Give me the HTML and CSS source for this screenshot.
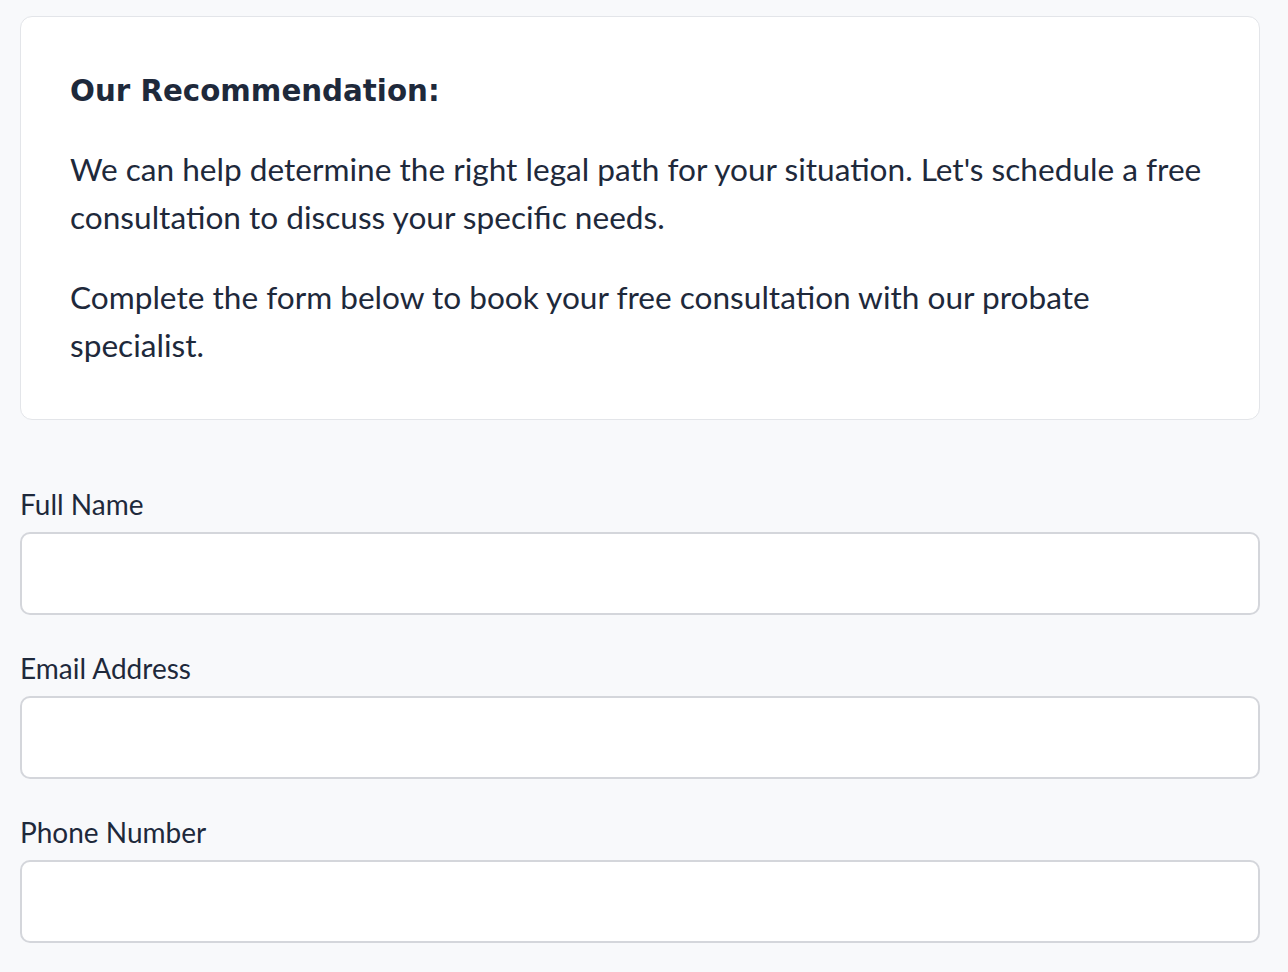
FILE: index.html
```html
<!DOCTYPE html>
<html lang="en">
<head>
<meta charset="utf-8">
<title>Free Consultation</title>
<link rel="stylesheet" href="styles.css">
</head>
<body>
<main class="page">
  <section class="card">
    <h2 class="card-title">Our Recommendation:</h2>
    <p class="card-text">We can help determine the right legal path for your situation. Let's schedule a free consultation to discuss your specific needs.</p>
    <p class="card-text">Complete the form below to book your free consultation with our probate specialist.</p>
  </section>
  <form class="form">
    <div class="field">
      <label class="label" for="name">Full Name</label>
      <input class="input" id="name" type="text">
    </div>
    <div class="field">
      <label class="label" for="email">Email Address</label>
      <input class="input" id="email" type="email">
    </div>
    <div class="field">
      <label class="label" for="phone">Phone Number</label>
      <input class="input" id="phone" type="tel">
    </div>
  </form>
</main>
</body>
</html>
```
FILE: styles.css
```css
* { box-sizing: border-box; }
html, body {
  margin: 0;
  background: #f8f9fb;
}
body {
  font-family: Lato, "Liberation Sans", sans-serif;
  color: #1e293b;
}
.page {
  padding: 16px 28px 0 20px;
}
.card {
  background: #ffffff;
  border: 1px solid #e3e5e9;
  border-radius: 12px;
  padding: 48px 48px 50px 49px;
}
.card-title {
  margin: 0 0 -4px;
  font-family: "DejaVu Sans", Inter, sans-serif;
  font-weight: 700;
  font-size: 29.3px;
  line-height: 52px;
  color: #1e293b;
}
.card-text {
  margin: 32px 0 0;
  font-size: 31.6px;
  line-height: 48px;
}
.form {
  display: flex;
  flex-direction: column;
  gap: 33px;
  padding-top: 64px;
}
.field {
  display: flex;
  flex-direction: column;
  gap: 8px;
}
.label {
  font-size: 28px;
  line-height: 40px;
  color: #1e293b;
}
.input {
  height: 83px;
  width: 100%;
  border: 2px solid #d4d6db;
  border-radius: 10px;
  background: #ffffff;
  font: inherit;
  padding: 0 20px;
}
```
